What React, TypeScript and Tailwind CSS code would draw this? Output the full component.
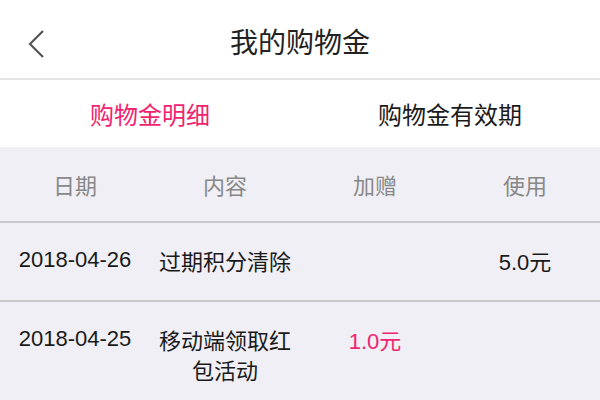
import React from "react";

const font = { fontFamily: '"Noto Sans CJK SC", "Liberation Sans", sans-serif' };

export default function App() {
  const rows = [
    { date: "2018-04-26", content: "过期积分清除", add: "", use: "5.0元" },
    { date: "2018-04-25", content: "移动端领取红包活动", add: "1.0元", use: "" },
  ];
  return (
    <div className="w-[600px] h-[400px] overflow-hidden bg-[#f0eff5]" style={font}>
      <div className="bg-white h-[78px] flex items-center relative">
        <svg className="absolute left-[26px] top-[29px]" width="20" height="30" viewBox="0 0 20 30">
          <path d="M17 2 L4 15 L17 28" fill="none" stroke="#555" strokeWidth="2.2" />
        </svg>
        <div className="flex-1 text-center text-[28px] text-[#222] leading-none pt-[4px]">我的购物金</div>
      </div>
      <div className="h-[2px] bg-[#e4e4e4]" />
      <div className="bg-white h-[67px] flex items-center">
        <div className="w-[300px] text-center text-[24px] text-[#f0236f]">购物金明细</div>
        <div className="w-[300px] text-center text-[24px] text-[#1a1a1a]">购物金有效期</div>
      </div>
      <div className="grid grid-cols-4 py-[22px] text-[22px] leading-[30px] text-[#888] text-center border-b-2 border-[#c9c9cc]">
        <div>日期</div>
        <div>内容</div>
        <div>加赠</div>
        <div>使用</div>
      </div>
      {rows.map((r) => (
        <div
          key={r.date}
          className="grid grid-cols-4 py-[22px] text-[22px] leading-[30px] text-[#1a1a1a] text-center border-b-2 border-[#c9c9cc]"
        >
          <div style={{ fontFamily: '"Liberation Sans", sans-serif' }}>{r.date}</div>
          <div>{r.content}</div>
          <div className="text-[#f0236f]">
            <span style={{ fontFamily: '"Liberation Sans", sans-serif' }}>{r.add.replace("元", "")}</span>
            {r.add ? "元" : ""}
          </div>
          <div>
            <span style={{ fontFamily: '"Liberation Sans", sans-serif' }}>{r.use.replace("元", "")}</span>
            {r.use ? "元" : ""}
          </div>
        </div>
      ))}
    </div>
  );
}
